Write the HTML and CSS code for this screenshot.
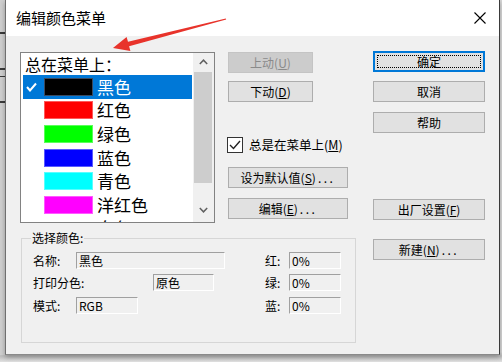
FILE: index.html
```html
<!DOCTYPE html>
<html lang="zh-CN">
<head>
<meta charset="utf-8">
<title>编辑颜色菜单</title>
<link rel="stylesheet" href="styles.css">
</head>
<body>
<div class="screen">
  <div class="behind"></div>
  <div class="window">
    <div class="titlebar">
      <span class="title">编辑颜色菜单</span>
      <svg class="close" width="12" height="12" viewBox="0 0 12 12"><path d="M0.5 0.5 L11.5 11.5 M11.5 0.5 L0.5 11.5" stroke="#000" stroke-width="1.1" fill="none"/></svg>
    </div>
    <div class="client">
      <div class="leftpane">
        <div class="toprow">
          <div class="listbox">
            <div class="listitems">
              <div class="lhead">总在菜单上：</div>
              <div class="item sel">
                <span class="check"><svg width="11" height="10" viewBox="0 0 11 10"><polyline points="1,5 4,8.5 10,1.5" fill="none" stroke="#fff" stroke-width="2"/></svg></span>
                <span class="swatch black"></span><span class="itext">黑色</span>
              </div>
              <div class="item"><span class="check"></span><span class="swatch red"></span><span class="itext">红色</span></div>
              <div class="item"><span class="check"></span><span class="swatch green"></span><span class="itext">绿色</span></div>
              <div class="item"><span class="check"></span><span class="swatch blue"></span><span class="itext">蓝色</span></div>
              <div class="item"><span class="check"></span><span class="swatch cyan"></span><span class="itext">青色</span></div>
              <div class="item"><span class="check"></span><span class="swatch magenta"></span><span class="itext">洋红色</span></div>
              <div class="item"><span class="check"></span><span class="swatch white"></span><span class="itext">白色</span></div>
            </div>
            <div class="scrollbar">
              <div class="sb-up"><svg width="9" height="6" viewBox="0 0 9 6"><polyline points="0.8,5 4.5,1.2 8.2,5" fill="none" stroke="#606060" stroke-width="1.5"/></svg></div>
              <div class="thumb"></div>
              <div class="sb-down"><svg width="9" height="6" viewBox="0 0 9 6"><polyline points="0.8,1 4.5,4.8 8.2,1" fill="none" stroke="#606060" stroke-width="1.5"/></svg></div>
            </div>
          </div>
          <div class="midcol">
            <div class="btn w85 disabled">上动(<u>U</u>)</div>
            <div class="btn w85 down">下动(<u>D</u>)</div>
            <div class="chkrow">
              <span class="chkbox"><svg width="14" height="14" viewBox="0 0 14 14"><polyline points="2,7 5.5,10.5 12,3" fill="none" stroke="#222" stroke-width="1.4"/></svg></span>
              <span class="chklabel">总是在菜单上(<u>M</u>)</span>
            </div>
            <div class="btn w120 setdef">设为默认值(<u>S</u>)<span class="dots">...</span></div>
            <div class="btn w120 edit">编辑(<u>E</u>)<span class="dots">...</span></div>
          </div>
        </div>
        <fieldset class="group">
          <legend>选择颜色:</legend>
          <div class="grow r1">
            <div class="gleft"><span class="lab l43">名称:</span><span class="field f149">黑色</span></div>
            <div class="gright"><span class="rlab">红:</span><span class="field f52">0%</span></div>
          </div>
          <div class="grow r2">
            <div class="gleft"><span class="lab l120">打印分色:</span><span class="field f61">原色</span></div>
            <div class="gright"><span class="rlab">绿:</span><span class="field f52">0%</span></div>
          </div>
          <div class="grow r3">
            <div class="gleft"><span class="lab l43">模式:</span><span class="field f62">RGB</span></div>
            <div class="gright"><span class="rlab">蓝:</span><span class="field f52">0%</span></div>
          </div>
        </fieldset>
      </div>
      <div class="rightcol">
        <div class="btn w112 default">确定</div>
        <div class="btn w112 cancel">取消</div>
        <div class="btn w112 help">帮助</div>
        <div class="btn w112 factory">出厂设置(<u>F</u>)</div>
        <div class="btn w112 newb">新建(<u>N</u>)<span class="dots">...</span></div>
      </div>
    </div>
  </div>
  <svg class="arrow" width="502" height="362" viewBox="0 0 502 362">
    <polygon points="226.2,19.5 225.8,18.5 128.0,41.8 126.6,37.0 113,48 130.4,51.0 129.1,46.3" fill="#e8332b"/>
  </svg>
</div>
</body>
</html>
```
FILE: styles.css
```css
* { box-sizing: border-box; }
html, body { margin: 0; padding: 0; }
body {
  width: 502px;
  height: 362px;
  overflow: hidden;
  background: #d4d4d4;
  font-family: "Noto Sans CJK SC", "Noto Sans", sans-serif;
  font-size: 12px;
  color: #000;
}
.screen {
  position: relative;
  display: flex;
  width: 502px;
  height: 362px;
  background: linear-gradient(#d8d8d8, #d8d8d8 352px, #bdbdbd 356px, #e2e2e2 362px);
}
.behind {
  width: 5px;
  height: 355px;
  background:
    linear-gradient(#cfcfcf 0, #cfcfcf 32px, #3a3a3a 32px, #3a3a3a 34px, #cfcfcf 34px, #cfcfcf 68px, #3a3a3a 68px, #3a3a3a 70px, #cfcfcf 70px, #cfcfcf 76px, #3a3a3a 76px, #3a3a3a 77px, #cfcfcf 77px, #cfcfcf 101px, #3a3a3a 101px, #3a3a3a 103px, #cfcfcf 103px);
}
.window {
  width: 495px;
  height: 355px;
  background: #f0f0f0;
  border-left: 1px solid #6f6f6f;
  border-right: 1px solid #3a3a3a;
  border-bottom: 1px solid #8a8a8a;
  box-shadow: 0 2px 5px rgba(0, 0, 0, 0.3);
  display: flex;
  flex-direction: column;
}
.titlebar {
  height: 36px;
  flex: none;
  background: #fff;
  display: flex;
  align-items: center;
  padding-left: 10px;
  padding-right: 13px;
}
.title { font-size: 15px; line-height: 20px; margin-top: -1px; }
.close { margin-left: auto; display: block; }

.client { display: flex; padding: 15px 0 0 14px; }
.leftpane { display: flex; flex-direction: column; width: 336px; }
.toprow { display: flex; }

.listbox {
  margin-top: 1px;
  width: 195px;
  height: 171px;
  border: 1px solid #828282;
  background: #fff;
  display: flex;
  overflow: hidden;
}
.listitems { flex: 1; overflow: hidden; }
.lhead { height: 22px; padding-left: 4px; font-size: 16px; line-height: 22px; }
.item {
  height: 23.6px;
  margin: 0 1px 0 2px;
  display: flex;
  align-items: center;
  font-size: 17px;
  line-height: 20px;
}
.item.sel { background: #0078d7; color: #fff; }
.check { width: 21px; padding-left: 3px; display: flex; align-items: center; }
.swatch { width: 49px; height: 18px; box-shadow: inset 0 0 0 1px rgba(255, 255, 255, 0.35); }
.black { background: #000; box-shadow: inset 0 0 0 1px #3a4a60; }
.red { background: #ff0000; }
.green { background: #00ff00; }
.blue { background: #0000ff; }
.cyan { background: #00ffff; }
.magenta { background: #ff00ff; }
.white { background: #ffffff; box-shadow: none; }
.itext { margin-left: 4px; }

.scrollbar { width: 21px; background: #f0f0f0; display: flex; flex-direction: column; }
.sb-up { height: 18px; display: flex; align-items: center; justify-content: center; }
.thumb { height: 111px; margin: 1px 2px 0 1px; background: #cdcdcd; }
.sb-down { margin-top: auto; height: 24px; display: flex; align-items: center; justify-content: center; }

.midcol { margin-left: 13px; margin-top: 1px; width: 120px; display: flex; flex-direction: column; align-items: flex-start; }
.btn {
  height: 21px;
  border: 1px solid #adadad;
  background: #e1e1e1;
  display: flex;
  align-items: center;
  justify-content: center;
  font-size: 12px;
  line-height: 14px;
  white-space: nowrap;
}
.btn u { text-decoration: underline; text-underline-offset: 1px; }
.w85 { width: 85px; }
.w120 { width: 120px; }
.w112 { width: 112px; }
.btn.disabled { background: #cccccc; border-color: #c4c4c4; color: #8a8a8a; }
.dots { letter-spacing: 2.5px; margin-left: 2px; }
.down { margin-top: 8px; }
.chkrow { margin-top: 35px; height: 16px; display: flex; align-items: center; margin-left: -1px; }
.chkbox { width: 16px; height: 16px; border: 1px solid #333; background: #fff; display: flex; align-items: center; justify-content: center; }
.chklabel { margin-left: 6px; font-size: 12.5px; line-height: 16px; }
.setdef { margin-top: 14px; }
.edit { margin-top: 10px; }

.group {
  margin: 8px 0 0 1px;
  width: 335px;
  height: 112px;
  padding: 0;
  border: 1px solid #d6d6d6;
  min-width: 0;
}
.group legend { margin-left: 9px; padding: 0 1px; font-size: 12px; line-height: 14px; }
.grow { display: flex; height: 17px; padding-left: 11px; }
.r1 { margin-top: 7px; }
.r2 { margin-top: 5px; }
.r3 { margin-top: 6px; }
.gleft { width: 232px; display: flex; align-items: center; }
.gright { display: flex; align-items: center; }
.lab { font-size: 12px; line-height: 14px; }
.l43 { width: 43px; }
.l120 { width: 120px; }
.rlab { width: 24px; font-size: 12px; line-height: 14px; }
.field {
  height: 17px;
  border-top: 1px solid #a0a0a0;
  border-left: 1px solid #a0a0a0;
  border-right: 1px solid #fff;
  border-bottom: 1px solid #fff;
  background: #f0f0f0;
  padding-left: 2px;
  font-size: 12px;
  line-height: 15px;
}
.f149 { width: 149px; }
.f61 { width: 61px; }
.f62 { width: 62px; }
.f52 { width: 52px; }

.rightcol { width: 112px; margin-left: 17px; display: flex; flex-direction: column; }
.btn.default {
  position: relative;
  border-color: #0078d7;
  box-shadow: inset 0 0 0 1px #0078d7;
}
.btn.default::after {
  content: "";
  position: absolute;
  inset: 3px;
  border: 1px dotted #000;
}
.cancel { margin-top: 9px; }
.help { margin-top: 10px; }
.factory { margin-top: 66px; }
.newb { margin-top: 19px; }

.arrow { position: absolute; left: 0; top: 0; pointer-events: none; }
```
